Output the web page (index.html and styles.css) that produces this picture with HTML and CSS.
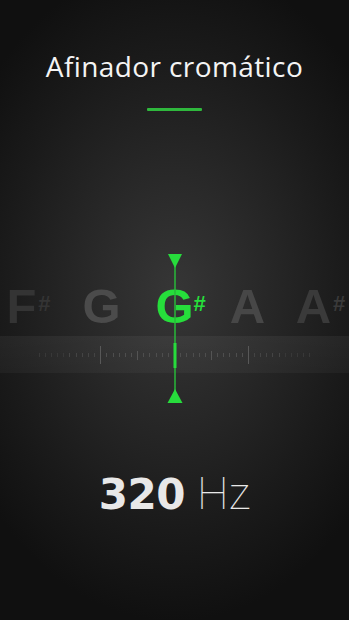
FILE: index.html
```html
<!DOCTYPE html>
<html lang="es">
<head>
<meta charset="utf-8">
<title>Afinador cromático</title>
<link rel="stylesheet" href="styles.css">
</head>
<body>
<main class="screen">
  <h1 class="title">Afinador cromático</h1>
  <div class="underline"></div>

  <section class="tuner">
    <div class="notes">
      <div class="note note-far"><span class="letter">F</span><span class="sharp">#</span></div>
      <div class="note note-near"><span class="letter">G</span></div>
      <div class="note note-active"><span class="letter">G<span class="sharp sharp-active">#</span></span></div>
      <div class="note note-near2"><span class="letter">A</span></div>
      <div class="note note-far2"><span class="letter">A</span><span class="sharp">#</span></div>
    </div>

    <div class="scale">
      <svg class="ticks" width="349" height="37" viewBox="0 0 349 37">
        <path class="tick-minor" d="M180.5 17V21M186.5 17V21M193.5 17V21M199.5 17V21M205.5 17V21M217.5 17V21M223.5 17V21M229.5 17V21M236.5 17V21M242.5 17V21M168.5 17V21M162.5 17V21M156.5 17V21M149.5 17V21M143.5 17V21M131.5 17V21M125.5 17V21M119.5 17V21M113.5 17V21M106.5 17V21"/>
        <path class="tick-outer" d="M254.5 17V21M260.5 17V21M266.5 17V21M272.5 17V21M279.5 17V21M94.5 17V21M88.5 17V21M82.5 17V21M76.5 17V21M69.5 17V21"/>
        <path class="tick-edge" d="M285.5 17V21M291.5 17V21M297.5 17V21M303.5 17V21M309.5 17V21M63.5 17V21M57.5 17V21M51.5 17V21M45.5 17V21M39.5 17V21"/>
        <path class="tick-mid" d="M211.5 15V24M137.5 15V24"/>
        <path class="tick-major" d="M248.5 10V28M100.5 10V28"/>
      </svg>
    </div>

    <svg class="needle" width="20" height="160" viewBox="0 0 20 160">
      <line class="needle-thin" x1="10" y1="16" x2="10" y2="141"/>
      <line class="needle-thick" x1="10" y1="93" x2="10" y2="118"/>
      <polygon class="needle-head" points="3,4 17,4 10,18"/>
      <polygon class="needle-head" points="10,139 17.5,153 2.5,153"/>
    </svg>
  </section>

  <div class="freq"><span class="freq-num">320</span><span class="freq-unit">Hz</span></div>
</main>
</body>
</html>
```

FILE: styles.css
```css
html, body {
  margin: 0;
  padding: 0;
}

body {
  width: 349px;
  height: 620px;
  overflow: hidden;
  background-color: #0f0f0f;
  background-image: radial-gradient(ellipse 240px 330px at 50% 47%, #363636 0%, #2a2a2a 32%, #1b1b1b 70%, #101010 100%);
  font-family: "Liberation Sans", Arial, sans-serif;
}

.screen {
  display: flex;
  flex-direction: column;
  align-items: center;
  padding-top: 48px;
  height: 620px;
  box-sizing: border-box;
}

.title {
  margin: 0;
  font-family: "Open Sans", "Noto Sans", sans-serif;
  font-weight: 400;
  font-size: 28px;
  line-height: 36px;
  color: #f4f4f4;
  letter-spacing: 0.4px;
}

.underline {
  width: 55px;
  height: 3px;
  margin-top: 24px;
  background: #2fb83d;
  border-radius: 1px;
}

.tuner {
  position: relative;
  width: 349px;
  height: 160px;
  margin-top: 139px;
}

.notes {
  display: flex;
  justify-content: center;
  margin-top: 32px;
  height: 49px;
}

.note {
  flex: 0 0 73px;
  display: flex;
  justify-content: center;
  align-items: flex-start;
  font-weight: 700;
  font-size: 49px;
  line-height: 49px;
}

.letter {
  position: relative;
}

.sharp {
  display: inline-block;
  font-size: 22px;
  line-height: 21px;
  margin-top: 11px;
  margin-left: 2px;
}

.note-far { color: #343434; }
.note-near { color: #4b4b4b; }
.note-near2 { color: #474747; }
.note-far2 { color: #3a3a3a; }

.note-active { color: #26de3b; }

.sharp-active {
  position: absolute;
  left: 100%;
  top: 0;
  margin-left: 0;
}

.scale {
  margin-top: 5px;
  height: 37px;
  background: linear-gradient(to bottom, rgba(255,255,255,0.05), rgba(255,255,255,0.035));
}

.ticks {
  display: block;
}

.ticks path {
  fill: none;
  stroke-width: 1;
}

.tick-minor { stroke: #4e4e4e; }
.tick-outer { stroke: #444444; }
.tick-edge { stroke: #383838; }
.tick-mid { stroke: #545454; }
.tick-major { stroke: #585858; }

.needle {
  position: absolute;
  top: 0;
  left: calc(50% - 10px);
  display: block;
}

.needle-thin {
  stroke: #28b83a;
  stroke-width: 1.5;
}

.needle-thick {
  stroke: #27dc3c;
  stroke-width: 3;
}

.needle-head {
  fill: #27dc3c;
}

.freq {
  display: flex;
  align-items: baseline;
  margin-top: 58px;
  line-height: 52px;
  color: #e8e8e8;
}

.freq-num {
  font-family: "DejaVu Sans", sans-serif;
  font-weight: 700;
  font-size: 42px;
  letter-spacing: -0.5px;
}

.freq-unit {
  font-family: Roboto, "Open Sans", sans-serif;
  font-weight: 100;
  font-size: 45px;
  margin-left: 12px;
}
```
